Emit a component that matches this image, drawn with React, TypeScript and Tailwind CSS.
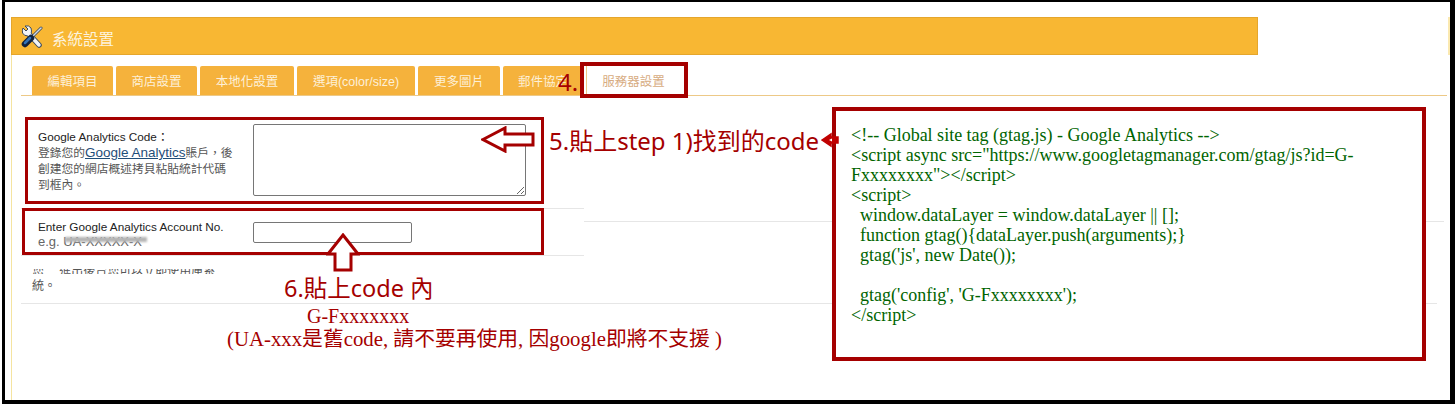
const sans = 'font-["Liberation_Sans","Noto_Sans_CJK_TC",sans-serif]';
const note = 'font-["Noto_Sans","Noto_Sans_CJK_TC",sans-serif]';

const tabs = [
  { label: '編輯項目', width: 'w-[81px]' },
  { label: '商店設置', width: 'w-[81px]' },
  { label: '本地化設置', width: 'w-[94px]' },
  { label: '選項(color/size)', width: 'w-[118px]' },
  { label: '更多圖片', width: 'w-[82px]' },
  { label: '郵件協定', width: 'w-[80px]' },
];

const codeLines = [
  '<!-- Global site tag (gtag.js) - Google Analytics -->',
  '<script async src="https://www.googletagmanager.com/gtag/js?id=G-',
  'Fxxxxxxxx"></script>',
  '<script>',
  '  window.dataLayer = window.dataLayer || [];',
  '  function gtag(){dataLayer.push(arguments);}',
  "  gtag('js', new Date());",
  '',
  "  gtag('config', 'G-Fxxxxxxxx');",
  '</script>',
];

function ToolsIcon() {
  return (
    <svg width="22" height="24" viewBox="0 0 22 24" fill="none" className="shrink-0">
      {/* wrench */}
      <path d="M7 8 L18 20" stroke="#3b4a5c" strokeWidth="5.5" strokeLinecap="round" />
      <path
        d="M2 3 L5 6 L7 4 L4 1 Q8 0 10 3 Q11 6 10 9 L7 11 Q3 11 1.5 8 Q1 5 2 3 Z"
        fill="#f2f4f6"
        stroke="#3b4a5c"
        strokeWidth="1"
      />
      <path d="M7 8 L18 20" stroke="#f2f4f6" strokeWidth="3.5" strokeLinecap="round" />
      {/* screwdriver */}
      <path d="M20 3 L11 12" stroke="#3b4a5c" strokeWidth="3" strokeLinecap="round" />
      <path d="M20 3 L11 12" stroke="#d5dbe2" strokeWidth="1.5" strokeLinecap="round" />
      <path d="M10 13 L4 19" stroke="#12233d" strokeWidth="6.5" strokeLinecap="round" />
      <path d="M9 13 L4 18" stroke="#3272b8" strokeWidth="2.5" strokeLinecap="round" />
    </svg>
  );
}

function ArrowLeft() {
  return (
    <svg width="54" height="27" viewBox="0 0 54 27" className="absolute left-[481px] top-[126px]">
      <path d="M2 13.5 L24 2 V8 H52 V19 H24 V25 Z" fill="#fff" stroke="#a50000" strokeWidth="3" />
    </svg>
  );
}

function ArrowUp() {
  return (
    <svg width="34" height="39" viewBox="0 0 34 39" className="absolute left-[326px] top-[233px]">
      <path d="M17 2 L32 21 H25 V37 H9 V21 H2 Z" fill="#fff" stroke="#a50000" strokeWidth="3" />
    </svg>
  );
}

function ArrowSmall() {
  return (
    <svg width="18" height="16" viewBox="0 0 18 16" className="absolute left-[821px] top-[132px]">
      <path d="M1 8 L10 2 V5 H17 V11 H10 V14 Z" fill="#c00000" stroke="#c00000" strokeWidth="1.5" />
      <path d="M8 8 L11 6.5 V9.5 Z" fill="#fff" />
    </svg>
  );
}

export default function App() {
  return (
    <div className={`relative h-[410px] w-[1455px] overflow-hidden bg-white ${sans}`}>
      {/* Frame */}
      <div className="ml-[2px] h-[404px] w-[1453px] border-t-2 border-r-[5px] border-b-[4px] border-l-[3px] border-black pt-[15px]">
        <div className="ml-[6px] flex h-[38px] w-[1247px] items-center gap-[9px] border border-[#e5a62c] bg-[#f8b733] pt-[1px] pl-[9px]">
          <ToolsIcon />
          <span className="mt-[6px] text-[15.5px] text-[#fdf3dc]">系統設置</span>
        </div>

        <div className="ml-[6px] h-[345px] w-[1435px] border-l border-[#f5e4a0]">
          {/* Tabs */}
          <div className="ml-[9px] flex h-[41px] w-[1426px] items-end border-b border-[#edc987] pl-[11px]">
            {tabs.map((tab) => (
              <div
                key={tab.label}
                className={`${tab.width} mr-[3px] flex h-[29px] items-center justify-center rounded-t-[2px] bg-[#f5b23c] pt-[3px] text-[12.5px] text-[#fdf0d8]`}
              >
                {tab.label}
              </div>
            ))}
            <div className="flex h-[30px] w-[99px] items-center justify-center border-x border-t border-[#edc987] bg-white pt-[4px] pr-[4px] text-[12.5px] text-[#d7ac82]">
              服務器設置
            </div>
          </div>

          {/* Google Analytics code */}
          <div className="ml-[9px] flex h-[113px] w-[563px] border-b border-[#e6e6e6] pt-[33px] pl-[17px]">
            <div className="w-[215px] text-[11.75px] leading-[16px] text-[#555]">
              <p className="text-[#222]">Google Analytics Code：</p>
              <p>
                登錄您的<span className="text-[13.5px] text-[#1f4e79] underline">Google Analytics</span>賬戶，後
              </p>
              <p>創建您的網店概述拷貝粘貼統計代碼</p>
              <p>到框內。</p>
            </div>
            <textarea
              readOnly
              className="-mt-[5px] h-[72px] w-[273px] rounded-[2px] border border-[#767676] bg-white"
            />
          </div>

          {/* Account number */}
          <div className="ml-[9px] flex h-[47px] w-[563px] border-b border-[#e6e6e6] pt-[10px] pl-[17px]">
            <div className="w-[215px] text-[11.75px] leading-[15px] text-[#222]">
              <p>Enter Google Analytics Account No.</p>
              <p className="relative text-[13px] text-[#666]">
                e.g. UA-XXXXX-X
                <span className="absolute top-[3px] left-[27px] h-[5px] w-[82px] bg-[#b5b5b5] blur-[1px]" />
              </p>
            </div>
            <input
              readOnly
              className="mt-[3px] h-[21px] w-[159px] rounded-[2px] border border-[#767676] bg-white"
            />
          </div>

          {/* Leftover row */}
          <div className="ml-[9px] h-[48px] w-[1416px] border-b border-[#e6e6e6] pt-[13px] pl-[11px] text-[12px] leading-[16px] text-[#555]">
            <p className="h-[5px] overflow-hidden leading-[4px]">您　 進出後台您可以立即使用庫系</p>
            <p className="mt-[4px]">統。</p>
          </div>
        </div>
      </div>

      {/* Gray rule behind the pasted patch, sliver at the right edge */}
      <div className="absolute top-[221px] left-[584px] h-px w-[860px] bg-[#e6e6e6]" />
      <div className="absolute top-[17px] left-[1448px] h-[38px] w-[2px] bg-[#fbe9b0]" />

      {/* Annotations */}
      <div className="absolute top-[62px] left-[580px] h-[36px] w-[108px] border-4 border-[#a50000]" />
      <span className={`absolute top-[66px] left-[558px] text-[24px] leading-[32px] text-[#a50000] ${note}`}>4.</span>

      <div className="absolute top-[117px] left-[25px] h-[87px] w-[519px] border-[3px] border-[#a50000]" />
      <div className="absolute top-[208px] left-[22px] h-[47px] w-[522px] border-[3px] border-[#a50000]" />
      <ArrowLeft />
      <ArrowUp />

      <span className={`absolute top-[124px] left-[549px] text-[24px] leading-[34px] whitespace-nowrap text-[#a50000] ${note}`}>
        5.貼上step 1)找到的code
      </span>
      <span className={`absolute top-[271px] left-[284px] text-[23.5px] leading-[34px] whitespace-nowrap text-[#a50000] ${note}`}>
        6.貼上code 內
      </span>
      <span className='absolute top-[305px] left-[307px] font-["Liberation_Serif",serif] text-[20px] leading-[22px] whitespace-nowrap text-[#a50000]'>
        G-Fxxxxxxx
      </span>
      <span className='absolute top-[326px] left-[227px] font-["Liberation_Serif","Noto_Sans_CJK_TC",serif] text-[20.8px] leading-[26px] whitespace-nowrap text-[#a50000]'>
        (UA-xxx是舊code, 請不要再使用, 因google即將不支援 )
      </span>

      {/* Code box */}
      <div className='absolute top-[107px] left-[832px] h-[254px] w-[594px] border-4 border-[#a50000] bg-white pt-[14px] pl-[15px] font-["Liberation_Serif",serif] text-[18px] leading-[20px] text-[#006400]'>
        {codeLines.map((line, i) => (
          <div key={i} className="h-[20px] whitespace-pre">
            {line}
          </div>
        ))}
      </div>
      <ArrowSmall />
    </div>
  );
}
